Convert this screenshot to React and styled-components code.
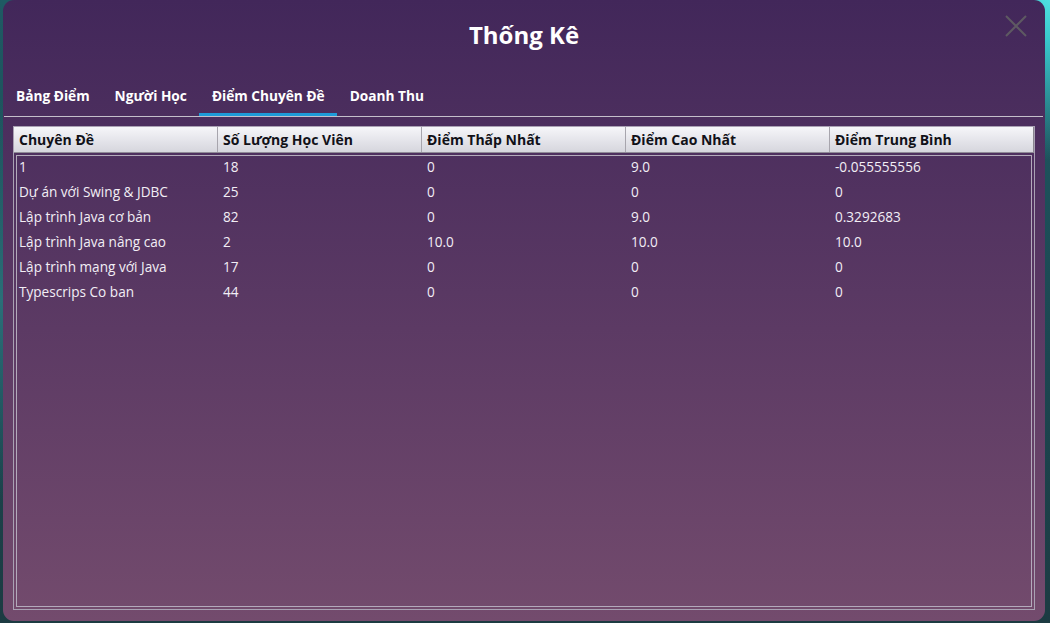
import styled, { createGlobalStyle } from 'styled-components';

const Global = createGlobalStyle`
  html, body {
    margin: 0;
    padding: 0;
    width: 1050px;
    height: 623px;
    overflow: hidden;
  }
  body {
    font-family: 'Open Sans', 'Noto Sans', sans-serif;
    background:
      radial-gradient(circle at 1050px 0px, #4fe0e0 0, #38c8cc 40px, rgba(40,140,150,0) 160px),
      radial-gradient(circle at 0px 300px, #2a6f78 0, rgba(30,80,90,0) 200px),
      linear-gradient(180deg, #1f5a63 0%, #1b4650 60%, #1c3b42 100%);
  }
`;

const Stage = styled.div`
  width: 1050px;
  height: 623px;
  box-sizing: border-box;
  padding: 0 5px 2px 3px;
  display: flex;
`;

const Dialog = styled.div`
  flex: 1;
  display: flex;
  flex-direction: column;
  border-radius: 11px;
  background: linear-gradient(180deg, #42275a 0%, #734b6d 100%);
  overflow: hidden;
`;

const TitleBar = styled.div`
  height: 68px;
  display: flex;
  align-items: center;
  justify-content: center;
  position: relative;
`;

const Title = styled.h1`
  margin: 0;
  font-size: 24px;
  font-weight: 700;
  color: #ffffff;
`;

const Close = styled.button`
  position: absolute;
  top: 14px;
  right: 17px;
  width: 24px;
  height: 24px;
  padding: 0;
  border: none;
  background: none;
  display: flex;
`;

const Tabs = styled.div`
  display: flex;
  margin: 0 2px 0 0.5px;
  border-bottom: 1px solid #c4bfca;
`;

const Tab = styled.div`
  padding: 19px 12.5px 0;
  height: 48px;
  box-sizing: border-box;
  font-size: 13.7px;
  font-weight: 700;
  color: #ffffff;
  line-height: 18px;
  border-bottom: 3px solid ${({ active }) => (active ? '#1e9bd8' : 'transparent')};
`;

const Content = styled.div`
  flex: 1;
  display: flex;
  padding: 9px 10px 11px 10px;
`;

const Table = styled.div`
  flex: 1;
  display: flex;
  flex-direction: column;
  border: 1px solid #a9a1b3;
`;

const Head = styled.div`
  display: grid;
  grid-template-columns: repeat(4, 204px) 1fr;
  height: 25px;
  background: linear-gradient(180deg, #f6f6f9 0%, #e4e4ea 55%, #d6d6dd 100%);
  border-bottom: 1px solid #8f8a96;
  border-right: 1px solid #8a8690;
`;

const HeadCell = styled.div`
  padding-left: 5px;
  font-size: 14px;
  font-weight: 700;
  color: #111118;
  line-height: 25px;
  white-space: nowrap;
  border-left: ${({ first }) => (first ? 'none' : '1px solid #a7a5ad')};
  margin-left: ${({ first }) => (first ? '0' : '-1px')};
`;

const Viewport = styled.div`
  flex: 1;
  margin: 2px;
  border: 1px solid #b3aabb;
`;

const Row = styled.div`
  display: grid;
  grid-template-columns: 201px repeat(3, 204px) 1fr;
  height: 25px;
`;

const Cell = styled.div`
  padding-left: 5px;
  font-size: 13.6px;
  line-height: 21px;
  color: #f2eef5;
  white-space: nowrap;
  &:first-child {
    padding-left: 2px;
  }
`;

const columns = [
  'Chuyên Đề',
  'Số Lượng Học Viên',
  'Điểm Thấp Nhất',
  'Điểm Cao Nhất',
  'Điểm Trung Bình',
];

const rows = [
  ['1', '18', '0', '9.0', '-0.055555556'],
  ['Dự án với Swing & JDBC', '25', '0', '0', '0'],
  ['Lập trình Java cơ bản', '82', '0', '9.0', '0.3292683'],
  ['Lập trình Java nâng cao', '2', '10.0', '10.0', '10.0'],
  ['Lập trình mạng với Java', '17', '0', '0', '0'],
  ['Typescrips Co ban', '44', '0', '0', '0'],
];

const tabs = ['Bảng Điểm', 'Người Học', 'Điểm Chuyên Đề', 'Doanh Thu'];

const App = () => (
  <>
    <Global />
    <Stage>
      <Dialog>
        <TitleBar>
          <Title>Thống Kê</Title>
          <Close aria-label="Đóng">
            <svg width="24" height="24" viewBox="0 0 24 24">
              <path d="M2 2 L22 22 M22 2 L2 22" stroke="#5e5962" strokeWidth="2" fill="none" />
            </svg>
          </Close>
        </TitleBar>
        <Tabs>
          {tabs.map((t) => (
            <Tab key={t} active={t === 'Điểm Chuyên Đề'}>{t}</Tab>
          ))}
        </Tabs>
        <Content>
          <Table>
            <Head>
              {columns.map((c, i) => (
                <HeadCell key={c} first={i === 0}>{c}</HeadCell>
              ))}
            </Head>
            <Viewport>
              {rows.map((r) => (
                <Row key={r[0]}>
                  {r.map((v, i) => (
                    <Cell key={i}>{v}</Cell>
                  ))}
                </Row>
              ))}
            </Viewport>
          </Table>
        </Content>
      </Dialog>
    </Stage>
  </>
);

export default App;
